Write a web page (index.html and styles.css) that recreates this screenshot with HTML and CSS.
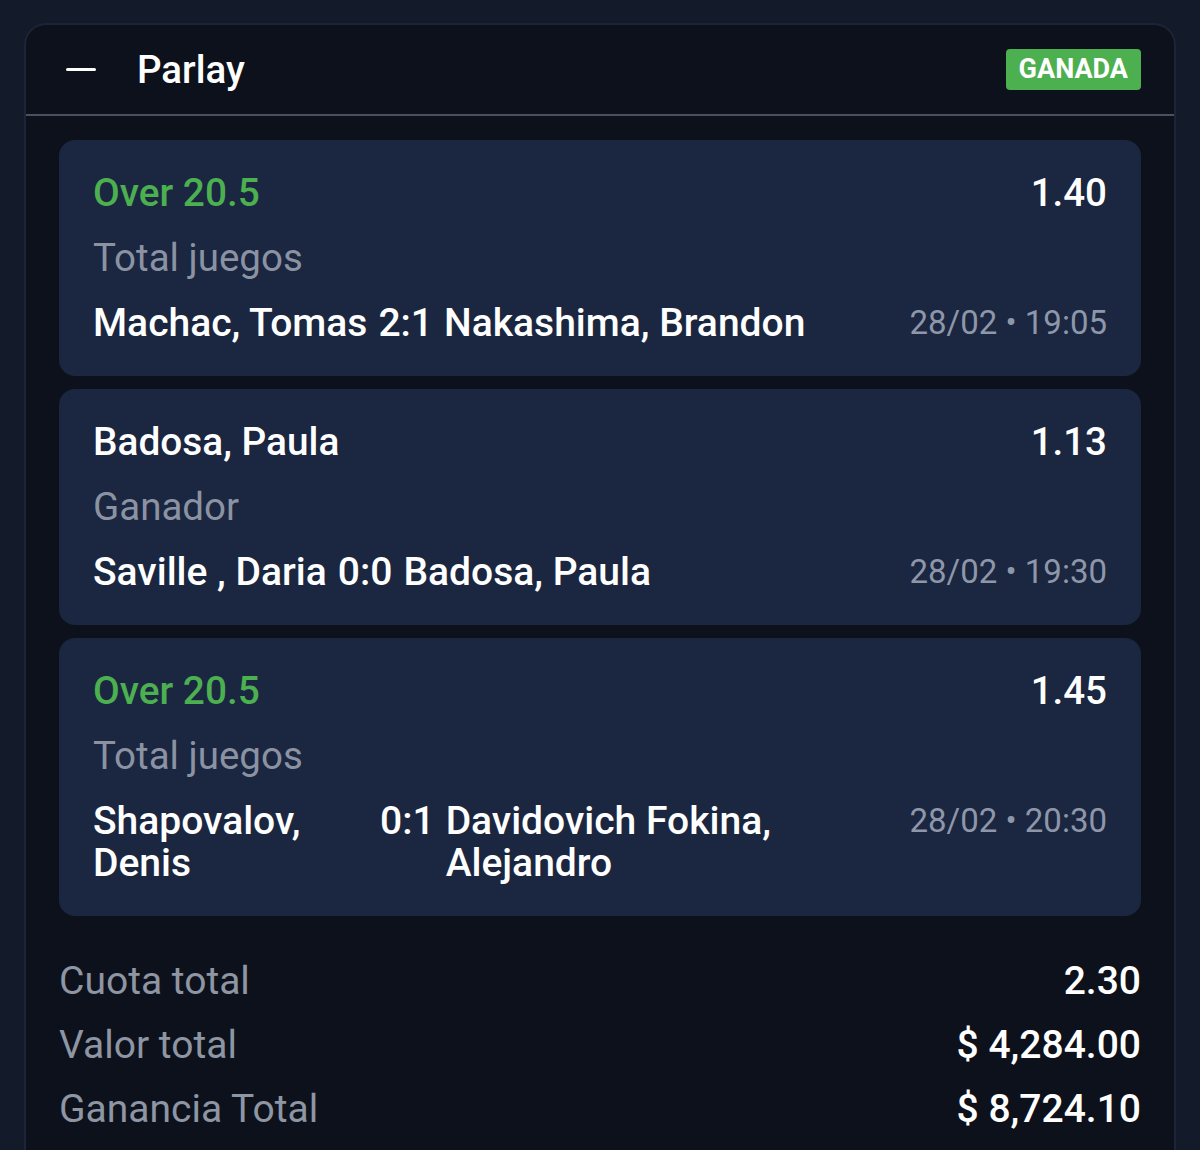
FILE: index.html
```html
<!DOCTYPE html>
<html lang="es">
<head>
<meta charset="utf-8">
<title>Parlay</title>
<link rel="stylesheet" href="styles.css">
</head>
<body>
<section class="slip">
  <header class="slip-head">
    <span class="minus" aria-hidden="true"></span>
    <h1 class="title">Parlay</h1>
    <span class="badge">GANADA</span>
  </header>
  <div class="slip-body">
    <article class="bet">
      <div class="row">
        <span class="pick win">Over 20.5</span>
        <span class="odds">1.40</span>
      </div>
      <div class="market">Total juegos</div>
      <div class="match">
        <span class="team1">Machac, Tomas</span>
        <span class="score">2:1</span>
        <span class="team2">Nakashima, Brandon</span>
        <span class="time">28/02 • 19:05</span>
      </div>
    </article>
    <article class="bet">
      <div class="row">
        <span class="pick">Badosa, Paula</span>
        <span class="odds">1.13</span>
      </div>
      <div class="market">Ganador</div>
      <div class="match">
        <span class="team1">Saville , Daria</span>
        <span class="score">0:0</span>
        <span class="team2">Badosa, Paula</span>
        <span class="time">28/02 • 19:30</span>
      </div>
    </article>
    <article class="bet">
      <div class="row">
        <span class="pick win">Over 20.5</span>
        <span class="odds">1.45</span>
      </div>
      <div class="market">Total juegos</div>
      <div class="match">
        <span class="team1">Shapovalov, Denis</span>
        <span class="score">0:1</span>
        <span class="team2">Davidovich Fokina, Alejandro</span>
        <span class="time">28/02 • 20:30</span>
      </div>
    </article>
    <dl class="summary">
      <div class="sum-row"><dt>Cuota total</dt><dd>2.30</dd></div>
      <div class="sum-row"><dt>Valor total</dt><dd>$ 4,284.00</dd></div>
      <div class="sum-row"><dt>Ganancia Total</dt><dd>$ 8,724.10</dd></div>
    </dl>
  </div>
</section>
</body>
</html>
```

FILE: styles.css
```css
html, body {
  margin: 0;
  padding: 0;
  background: #131a29;
}
body {
  padding: 23px 24px 0 24px;
  font-family: Roboto, "Noto Sans", "Liberation Sans", sans-serif;
  color: #ffffff;
}
.slip {
  background: #0d111c;
  border: 2px solid #1c2436;
  border-bottom: none;
  border-radius: 22px 22px 0 0;
  min-height: 1140px;
  box-sizing: border-box;
}
.slip-head {
  display: flex;
  align-items: center;
  height: 89px;
  padding: 0 33px 0 40px;
  border-bottom: 2px solid #4a5062;
}
.minus {
  width: 30px;
  height: 3px;
  background: #ffffff;
  border-radius: 2px;
  margin-right: 41px;
}
.title {
  margin: 0;
  font-size: 38.5px;
  font-weight: 500;
  line-height: 42px;
  flex: 1;
}
.badge {
  background: #4caf50;
  color: #ffffff;
  font-weight: 700;
  font-size: 27px;
  line-height: 41px;
  height: 41px;
  padding: 0 13px;
  border-radius: 4px;
}
.slip-body {
  padding: 24px 33px 0 33px;
  display: flex;
  flex-direction: column;
  gap: 13px;
}
.bet {
  background: #1b2640;
  border-radius: 16px;
  padding: 32px 34px 32px 34px;
  display: flex;
  flex-direction: column;
  gap: 23px;
}
.row {
  display: flex;
  justify-content: space-between;
  line-height: 42px;
}
.pick {
  font-size: 38.8px;
  font-weight: 500;
  color: #ffffff;
}
.pick.win {
  color: #4caf50;
}
.odds {
  font-size: 38.5px;
  font-weight: 500;
}
.market {
  font-size: 38.5px;
  line-height: 42px;
  color: #8b93a3;
}
.match {
  display: flex;
  align-items: flex-start;
  gap: 11px;
  font-size: 39px;
  font-weight: 500;
  line-height: 42px;
}
.team1 {
  max-width: 276px;
  flex: 0 0 auto;
}
.score {
  flex: 0 0 auto;
}
.team2 {
  flex: 0 1 auto;
  min-width: 0;
}
.time {
  margin-left: auto;
  flex: 0 0 auto;
  white-space: nowrap;
  font-size: 33px;
  font-weight: 400;
  color: #8e97aa;
}
.summary {
  margin: 20px 0 0 0;
  display: flex;
  flex-direction: column;
}
.sum-row {
  display: flex;
  justify-content: space-between;
  line-height: 64px;
  font-size: 39px;
}
.sum-row dt {
  color: #8e95a3;
}
.sum-row dd {
  margin: 0;
  font-weight: 500;
  color: #ffffff;
}
```
